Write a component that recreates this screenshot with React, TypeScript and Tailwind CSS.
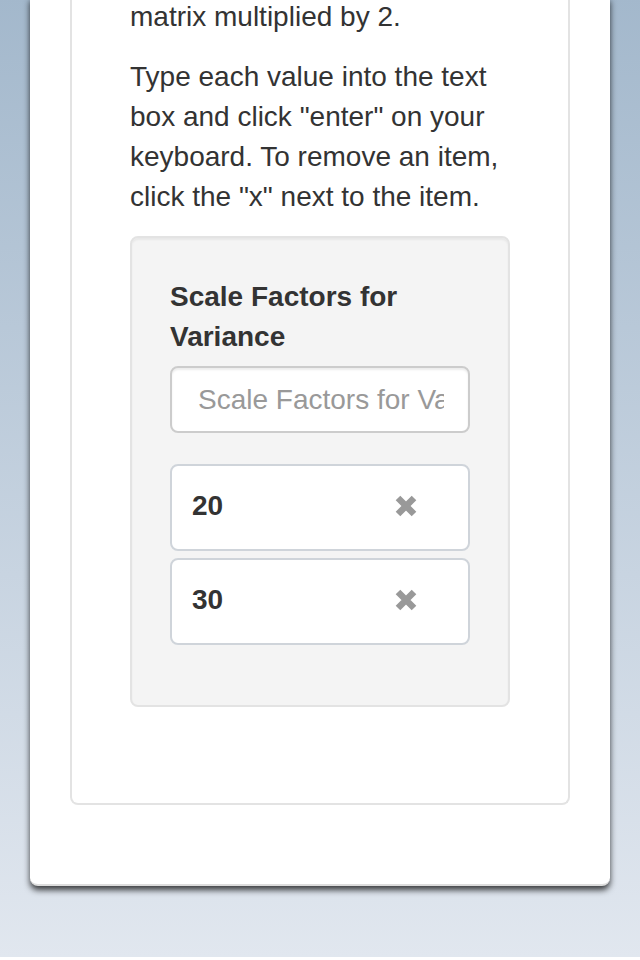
import React from "react";

function RemoveIcon() {
  return (
    <svg width="24" height="24" viewBox="0 0 24 24" className="shrink-0">
      <path
        d="M4 4 L20 20 M20 4 L4 20"
        stroke="#999999"
        strokeWidth="6.5"
        strokeLinecap="butt"
      />
    </svg>
  );
}

const items = ["20", "30"];

export default function App() {
  return (
    <div className="min-h-screen bg-gradient-to-b from-[#a3b8cc] to-[#e1e7ef] font-['Liberation_Sans',Arial,sans-serif] text-[#333333]">
      {/* Outer page card */}
      <div className="mx-[30px] bg-white rounded-b-[8px] border-b-2 border-[#dddddd] px-[40px] pb-[79px] shadow-[0_4px_6px_rgba(0,0,0,0.75)]">
        {/* Inner bordered card */}
        <div className="border-x-2 border-b-2 border-[#e3e3e3] rounded-b-[8px] px-[58px] pb-[96px]">
          <p className="-mt-[3px] mb-[20px] text-[28px] leading-[40px]">
            matrix multiplied by 2.
          </p>
          <p className="mb-[19px] text-[28px] leading-[40px]">
            Type each value into the text box and click "enter" on your
            keyboard. To remove an item, click the "x" next to the item.
          </p>

          {/* Well */}
          <div className="bg-[#f4f4f4] border-2 border-[#e3e3e3] rounded-[8px] px-[38px] pt-[39px] pb-[60px] shadow-[inset_0_2px_2px_rgba(0,0,0,0.05)]">
            <label className="block text-[28px] leading-[40px] font-bold mb-[9px]">
              Scale Factors for Variance
            </label>
            <input
              type="text"
              placeholder="Scale Factors for Variance"
              className="block w-[300px] h-[67px] bg-white border-2 border-[#cccccc] rounded-[8px] pl-[26px] pr-[24px] text-[28px] text-[#555555] placeholder:text-[#999999] outline-none shadow-[inset_0_2px_2px_rgba(0,0,0,0.075)]"
            />
            <div className="mt-[31px] flex flex-col gap-[7px] w-[300px]">
              {items.map((v) => (
                <div
                  key={v}
                  className="h-[87px] bg-white border-2 border-[#cfd4da] rounded-[8px] pl-[20px] pr-[50px] pt-[20px] flex items-start justify-between"
                >
                  <span className="text-[28px] leading-[40px] font-bold">{v}</span>
                  <span className="h-[40px] flex items-center">
                    <RemoveIcon />
                  </span>
                </div>
              ))}
            </div>
          </div>
        </div>
      </div>
    </div>
  );
}
